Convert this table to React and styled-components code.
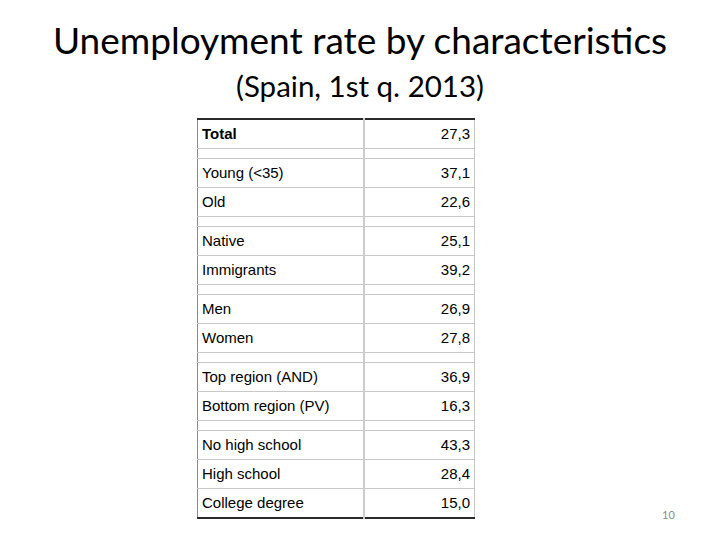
import React from "react";
import styled, { createGlobalStyle } from "styled-components";

const GlobalStyle = createGlobalStyle`
  html, body {
    margin: 0;
    padding: 0;
    background: #ffffff;
  }
`;

const Slide = styled.div`
  width: 720px;
  height: 540px;
  position: relative;
  background: #ffffff;
  display: flex;
  flex-direction: column;
  overflow: hidden;
`;

const Heading = styled.div`
  display: flex;
  flex-direction: column;
  align-items: center;
  padding-top: 16px;
  font-family: "Lato", "Open Sans", sans-serif;
  color: #000;
`;

const Title = styled.h1`
  margin: 0;
  font-weight: 400;
  font-size: 37px;
  line-height: 48px;
`;

const Subtitle = styled.h2`
  margin: 0;
  font-weight: 400;
  font-size: 29.5px;
  line-height: 44px;
`;

const TableWrap = styled.div`
  padding: 10px 0 0 197px;
`;

const Table = styled.table`
  border-collapse: collapse;
  font-family: "Liberation Sans", Arial, sans-serif;
  font-size: 15px;
  color: #000;
  border-top: 2px solid #2a2a2a;
  border-bottom: 2px solid #2a2a2a;
  border-left: 1px solid #8a8a8a;
  border-right: 1px solid #c4c4c4;
`;

const Cell = styled.td`
  height: ${(p) => (p.$spacer ? "9px" : "28px")};
  padding: 0 4px;
  border-bottom: 1px solid #c8c8c8;
  border-right: ${(p) => (p.$num ? "none" : "2px solid #cccccc")};
  width: ${(p) => (p.$num ? "101px" : "157px")};
  text-align: ${(p) => (p.$num ? "right" : "left")};
  font-weight: ${(p) => (p.$bold ? 700 : 400)};
  vertical-align: middle;
  line-height: 18px;
`;

const PageNumber = styled.div`
  position: absolute;
  left: 662px;
  top: 508px;
  font-family: "Lato", "Open Sans", sans-serif;
  font-size: 11px;
  color: #8c8c8c;
`;

const groups = [
  [["Total", "27,3", true]],
  [
    ["Young (<35)", "37,1"],
    ["Old", "22,6"],
  ],
  [
    ["Native", "25,1"],
    ["Immigrants", "39,2"],
  ],
  [
    ["Men", "26,9"],
    ["Women", "27,8"],
  ],
  [
    ["Top region (AND)", "36,9"],
    ["Bottom region (PV)", "16,3"],
  ],
  [
    ["No high school", "43,3"],
    ["High school", "28,4"],
    ["College degree", "15,0"],
  ],
];

const App = () => {
  const rows = [];
  groups.forEach((group, gi) => {
    if (gi > 0) {
      rows.push(
        <tr key={`s${gi}`}>
          <Cell $spacer />
          <Cell $spacer $num />
        </tr>
      );
    }
    group.forEach(([label, value, bold]) => {
      rows.push(
        <tr key={label}>
          <Cell $bold={bold}>{label}</Cell>
          <Cell $num>{value}</Cell>
        </tr>
      );
    });
  });

  return (
    <Slide>
      <GlobalStyle />
      <Heading>
        <Title>Unemployment rate by characteristics</Title>
        <Subtitle>(Spain, 1st q. 2013)</Subtitle>
      </Heading>
      <TableWrap>
        <Table>
          <tbody>{rows}</tbody>
        </Table>
      </TableWrap>
      <PageNumber>10</PageNumber>
    </Slide>
  );
};

export default App;
